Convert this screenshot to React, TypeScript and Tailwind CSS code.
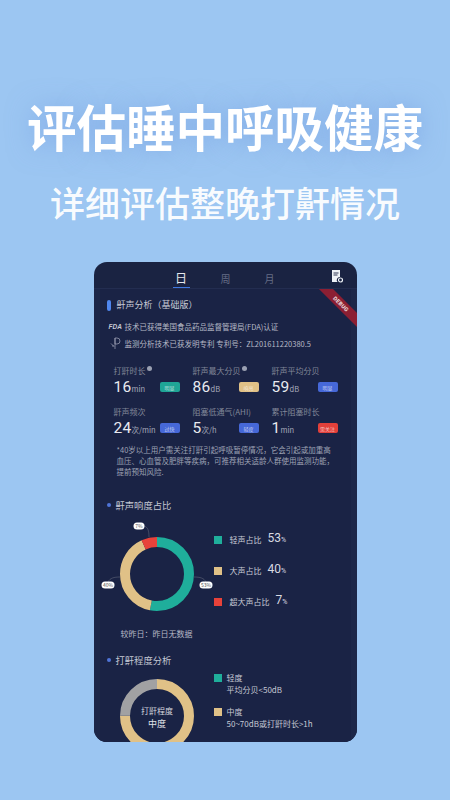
const font = "font-['Noto_Sans_CJK_SC','Noto_Sans',sans-serif]";

function Metric({ label, sup, value, unit, tag, tagClass }: { label: string; sup?: boolean; value: string; unit: string; tag: string; tagClass: string }) {
  return (
    <div className="flex flex-col">
      <div className="flex h-[14px] items-center text-[8px] leading-[14px] text-[#828899]">
        <span className="whitespace-nowrap">{label}</span>
        {sup && <span className="mb-[6px] ml-[1px] h-[5px] w-[5px] rounded-full bg-[#9aa0b2]" />}
      </div>
      <div className="flex h-[18px] items-center">
        <div className="flex w-[46px] items-baseline text-[#e8eaf0]">
          <span className="font-['Roboto',sans-serif] text-[15.5px] leading-[18px] tracking-[0.3px]">{value}</span>
          <span className="whitespace-nowrap text-[7.5px] text-[#a8acbc]">{unit}</span>
        </div>
        <span className={`flex h-[10px] w-[20px] items-center justify-center rounded-[2px] text-[5px] leading-none text-white/70 ${tagClass}`}>{tag}</span>
      </div>
    </div>
  );
}

function Donut({ segments, children }: { segments: { pct: number; color: string }[]; children?: React.ReactNode }) {
  const r = 32;
  const c = 2 * Math.PI * r;
  let off = 0;
  return (
    <svg width="110" height="100" viewBox="0 0 110 100" className="shrink-0 overflow-visible">
      <g transform="rotate(-90 55 50)">
        {segments.map((s) => {
          const el = <circle key={s.color} cx="55" cy="50" r={r} fill="none" stroke={s.color} strokeWidth="10" strokeDasharray={`${(s.pct / 100) * c} ${c}`} strokeDashoffset={-off} />;
          off += (s.pct / 100) * c;
          return el;
        })}
      </g>
      {children}
    </svg>
  );
}

function Pill({ x, y, w, t }: { x: number; y: number; w: number; t: string }) {
  return (
    <g>
      <rect x={x - w / 2} y={y - 3.5} width={w} height="7" rx="3.5" fill="#fff" />
      <text x={x} y={y + 1.8} textAnchor="middle" fontSize="5" fill="#555">{t}</text>
    </g>
  );
}

function LegendRow({ color, label, value }: { color: string; label: string; value: string }) {
  return (
    <div className="flex h-[31px] items-center">
      <span className="h-[8px] w-[8px]" style={{ background: color }} />
      <span className="ml-[8px] whitespace-nowrap text-[8px] text-[#c9ccd6]">{label}</span>
      <span className="ml-[6px] mt-[-3px] flex items-baseline font-['Roboto',sans-serif] text-[#d8dae2]">
        <span className="text-[12px]">{value}</span>
        <span className="text-[7px]">%</span>
      </span>
    </div>
  );
}

function SectionTitle({ children }: { children: React.ReactNode }) {
  return (
    <div className="ml-[-1px] flex items-center text-[9.3px] leading-[14px] text-[#c5c8d4]">
      <span className="mr-[5px] h-[4px] w-[4px] rounded-full bg-[#4f74d8]" />
      {children}
    </div>
  );
}

export default function App() {
  return (
    <div className={`flex h-[800px] w-[450px] flex-col items-center overflow-hidden bg-[#9cc6f2] ${font}`}>
      <h1 className="mt-[91px] h-[70px] whitespace-nowrap text-[49.5px] font-bold leading-[70px] text-white [text-shadow:0_0_24px_rgba(110,150,220,0.55)]">评估睡中呼吸健康</h1>
      <p className="mt-[16px] h-[50px] whitespace-nowrap text-[35px] font-medium leading-[50px] text-white/95">详细评估整晚打鼾情况</p>

      <div className="mt-[35px] flex h-[480px] w-[263px] shrink-0 flex-col overflow-hidden rounded-[13px] bg-[#1a2342]">
        <div className="relative flex h-[27px] shrink-0 items-center border-b border-[#232d50] text-[10px] text-[#666d86]">
          <div className="ml-[79px] flex h-full w-[17px] flex-col items-center justify-end border-b border-[#3f78e0] pb-[1px] text-[12px] leading-[16px] text-[#e6e8ee]">日</div>
          <span className="ml-[31px] mt-[6px]">周</span>
          <span className="ml-[34px] mt-[6px]">月</span>
          <svg className="absolute left-[237px] top-[8px]" width="12" height="13" viewBox="0 0 12 13">
            <path d="M1 0h8v7A3 3 0 0 0 6.5 12H1z" fill="#eef1f6" />
            <path d="M2.5 3h5M2.5 5h4" stroke="#1a2342" strokeWidth="0.9" />
            <circle cx="9.5" cy="10" r="2" fill="none" stroke="#eef1f6" strokeWidth="1.2" />
          </svg>
        </div>

        <div className="relative flex-1 overflow-hidden bg-[#1d2749]">
          <div className="mx-[6px] h-full bg-[#1a2345] px-[8px] pt-[9px]">
            <div className="ml-[-1px] flex items-center text-[9px] leading-[14px] text-[#c8cbd6]">
              <span className="mr-[6px] h-[11px] w-[4px] rounded-[2px] bg-[#4f86ee]" />
              <span>鼾声分析（基础版）</span>
            </div>
            <div className="mt-[9px] flex h-[12px] items-center whitespace-nowrap text-[7.5px] text-[#b6b9c6]">
              <span className="ml-[1px] w-[16px] font-['Liberation_Sans',sans-serif] text-[6.5px] font-bold italic text-[#c6c9d4]">FDA</span>
              <span>技术已获得美国食品药品监督管理局(FDA)认证</span>
            </div>
            <div className="mt-[3px] flex h-[15px] items-center whitespace-nowrap text-[7.5px] text-[#b6b9c6]">
              <svg className="ml-[2px] mr-[4px]" width="11" height="13" viewBox="0 0 11 13" fill="none" stroke="#a6aabb" strokeWidth="0.7">
                <path d="M5 1h2a3 3 0 0 1 0 6H5zM5 1v11M1 6.5l3 3M2 9h2" />
              </svg>
              <span>监测分析技术已获发明专利 专利号：ZL201611220380.5</span>
            </div>

            <div className="ml-[6px] mt-[13px] grid grid-cols-[79px_79px_70px] gap-y-[9px]">
              <Metric label="打鼾时长" sup value="16" unit="min" tag="明显" tagClass="bg-[#1fa596]" />
              <Metric label="鼾声最大分贝" sup value="86" unit="dB" tag="响亮" tagClass="bg-[#e0c187]" />
              <Metric label="鼾声平均分贝" value="59" unit="dB" tag="明显" tagClass="bg-[#4668d8]" />
              <Metric label="鼾声频次" value="24" unit="次/min" tag="过快" tagClass="bg-[#4668d8]" />
              <Metric label="阻塞低通气(AHI)" value="5" unit="次/h" tag="轻度" tagClass="bg-[#4668d8]" />
              <Metric label="累计阻塞时长" value="1" unit="min" tag="需关注" tagClass="bg-[#e2403a]" />
            </div>

            <p className="ml-[9px] mt-[7px] whitespace-nowrap text-[7.5px] leading-[11px] text-[#9ea2b4]">
              *40岁以上用户需关注打鼾引起呼吸暂停情况，它会引起或加重高
              <br />
              血压、心血管及肥胖等疾病，可推荐相关适龄人群使用监测功能，
              <br />
              提前预知风险.
            </p>

            <div className="mt-[21px]">
              <SectionTitle>鼾声响度占比</SectionTitle>
            </div>
            <div className="ml-[-6px] mt-[12px] flex h-[100px] items-start">
              <Donut segments={[{ pct: 53, color: "#1fae9b" }, { pct: 40, color: "#e0c187" }, { pct: 7, color: "#e8423a" }]}>
                <path d="M92 53c6 0 10 1 12 5M18 53c-6 0-10 1-12 5M47 13c0-6-1-10-5-11" fill="none" stroke="#6d7285" strokeWidth="0.5" />
                <Pill x={104} y={61} w={13} t="53%" />
                <Pill x={6} y={61} w={13} t="40%" />
                <Pill x={37} y={2} w={11} t="7%" />
              </Donut>
              <div className="ml-[2px] flex flex-col">
                <LegendRow color="#1fae9b" label="轻声占比" value="53" />
                <LegendRow color="#e0c187" label="大声占比" value="40" />
                <LegendRow color="#e8423a" label="超大声占比" value="7" />
              </div>
            </div>
            <div className="ml-[13px] mt-[3px] text-[8px] leading-[14px] text-[#b6b9c6]">较昨日：昨日无数据</div>

            <div className="mt-[12px]">
              <SectionTitle>打鼾程度分析</SectionTitle>
            </div>
            <div className="ml-[-6px] mt-[-1px] flex h-[100px] items-start">
              <Donut segments={[{ pct: 75, color: "#e0c187" }, { pct: 25, color: "#a1a1a3" }]}>
                <text x="55" y="48" textAnchor="middle" fontSize="8" fill="#d5d7df">打鼾程度</text>
                <text x="55" y="60.5" textAnchor="middle" fontSize="9" fill="#e0e2e8">中度</text>
              </Donut>
              <div className="ml-[2px] mt-[6px] flex flex-col text-[8px] leading-[12px] text-[#c5c8d4]">
                <div className="flex items-center"><span className="mr-[5px] h-[8px] w-[8px] bg-[#1fae9b]" />轻度</div>
                <div className="ml-[13px]">平均分贝&lt;50dB</div>
                <div className="mt-[10px] flex items-center"><span className="mr-[5px] h-[8px] w-[8px] bg-[#e0c187]" />中度</div>
                <div className="ml-[13px] whitespace-nowrap">50~70dB或打鼾时长&gt;1h</div>
                <div className="mt-[10px] flex items-center"><span className="mr-[5px] h-[8px] w-[8px] bg-[#e8423a]" />重度</div>
              </div>
            </div>
          </div>

          <div className="absolute left-[202px] top-[10px] flex h-[10px] w-[90px] rotate-45 items-center justify-center bg-[#8c1f33] font-['Roboto',sans-serif] text-[5.5px] font-bold tracking-[0.3px] text-white/90">DEBUG</div>
        </div>
      </div>
    </div>
  );
}
